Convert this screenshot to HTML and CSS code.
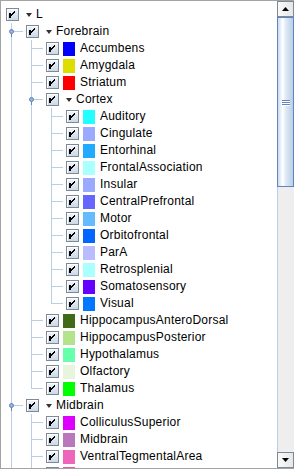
FILE: index.html
```html
<!DOCTYPE html>
<html>
<head>
<meta charset="utf-8">
<link rel="stylesheet" href="styles.css">
</head>
<body>
<div class="frame">
  <div class="tree">
    <div class="row"><span class="cb"></span><span class="tri"></span><span class="lbl">L</span></div>
    <div class="row"><span class="ind knob"></span><span class="cb"></span><span class="tri"></span><span class="lbl">Forebrain</span></div>
    <div class="row"><span class="ind v"></span><span class="ind tee"></span><span class="cb"></span><span class="sw" style="background:#0000ff"></span><span class="lbl">Accumbens</span></div>
    <div class="row"><span class="ind v"></span><span class="ind tee"></span><span class="cb"></span><span class="sw" style="background:#dddd00"></span><span class="lbl">Amygdala</span></div>
    <div class="row"><span class="ind v"></span><span class="ind tee"></span><span class="cb"></span><span class="sw" style="background:#ff0000"></span><span class="lbl">Striatum</span></div>
    <div class="row"><span class="ind v"></span><span class="ind knob"></span><span class="cb"></span><span class="tri"></span><span class="lbl">Cortex</span></div>
    <div class="row"><span class="ind v"></span><span class="ind v"></span><span class="ind tee"></span><span class="cb"></span><span class="sw" style="background:#22ffff"></span><span class="lbl">Auditory</span></div>
    <div class="row"><span class="ind v"></span><span class="ind v"></span><span class="ind tee"></span><span class="cb"></span><span class="sw" style="background:#99aaff"></span><span class="lbl">Cingulate</span></div>
    <div class="row"><span class="ind v"></span><span class="ind v"></span><span class="ind tee"></span><span class="cb"></span><span class="sw" style="background:#22aaff"></span><span class="lbl">Entorhinal</span></div>
    <div class="row"><span class="ind v"></span><span class="ind v"></span><span class="ind tee"></span><span class="cb"></span><span class="sw" style="background:#aaffff"></span><span class="lbl">FrontalAssociation</span></div>
    <div class="row"><span class="ind v"></span><span class="ind v"></span><span class="ind tee"></span><span class="cb"></span><span class="sw" style="background:#99aaff"></span><span class="lbl">Insular</span></div>
    <div class="row"><span class="ind v"></span><span class="ind v"></span><span class="ind tee"></span><span class="cb"></span><span class="sw" style="background:#6666ff"></span><span class="lbl">CentralPrefrontal</span></div>
    <div class="row"><span class="ind v"></span><span class="ind v"></span><span class="ind tee"></span><span class="cb"></span><span class="sw" style="background:#66bbff"></span><span class="lbl">Motor</span></div>
    <div class="row"><span class="ind v"></span><span class="ind v"></span><span class="ind tee"></span><span class="cb"></span><span class="sw" style="background:#0066ff"></span><span class="lbl">Orbitofrontal</span></div>
    <div class="row"><span class="ind v"></span><span class="ind v"></span><span class="ind tee"></span><span class="cb"></span><span class="sw" style="background:#bbbbff"></span><span class="lbl">ParA</span></div>
    <div class="row"><span class="ind v"></span><span class="ind v"></span><span class="ind tee"></span><span class="cb"></span><span class="sw" style="background:#aaffff"></span><span class="lbl">Retrosplenial</span></div>
    <div class="row"><span class="ind v"></span><span class="ind v"></span><span class="ind tee"></span><span class="cb"></span><span class="sw" style="background:#6600ff"></span><span class="lbl">Somatosensory</span></div>
    <div class="row"><span class="ind v"></span><span class="ind v"></span><span class="ind ell"></span><span class="cb"></span><span class="sw" style="background:#0077ff"></span><span class="lbl">Visual</span></div>
    <div class="row"><span class="ind v"></span><span class="ind tee"></span><span class="cb"></span><span class="sw" style="background:#3f6a18"></span><span class="lbl">HippocampusAnteroDorsal</span></div>
    <div class="row"><span class="ind v"></span><span class="ind tee"></span><span class="cb"></span><span class="sw" style="background:#b3e38a"></span><span class="lbl">HippocampusPosterior</span></div>
    <div class="row"><span class="ind v"></span><span class="ind tee"></span><span class="cb"></span><span class="sw" style="background:#66ffaa"></span><span class="lbl">Hypothalamus</span></div>
    <div class="row"><span class="ind v"></span><span class="ind tee"></span><span class="cb"></span><span class="sw" style="background:#e6f5dc"></span><span class="lbl">Olfactory</span></div>
    <div class="row"><span class="ind v"></span><span class="ind ell"></span><span class="cb"></span><span class="sw" style="background:#00ff00"></span><span class="lbl">Thalamus</span></div>
    <div class="row"><span class="ind knob"></span><span class="cb"></span><span class="tri"></span><span class="lbl">Midbrain</span></div>
    <div class="row"><span class="ind v"></span><span class="ind tee"></span><span class="cb"></span><span class="sw" style="background:#dd00ff"></span><span class="lbl">ColliculusSuperior</span></div>
    <div class="row"><span class="ind v"></span><span class="ind tee"></span><span class="cb"></span><span class="sw" style="background:#bb77bb"></span><span class="lbl">Midbrain</span></div>
    <div class="row"><span class="ind v"></span><span class="ind tee"></span><span class="cb"></span><span class="sw" style="background:#ee66bb"></span><span class="lbl">VentralTegmentalArea</span></div>
    <div class="row"><span class="ind v"></span><span class="ind tee"></span><span class="cb"></span><span class="sw" style="background:#ee55aa"></span><span class="lbl">ColliculusInferior</span></div>
  </div>
  <div class="sb">
    <div class="sbtn up"><svg width="7" height="4" viewBox="0 0 7 4"><path d="M0 4H7L3.5 0Z" fill="#000"/></svg></div>
    <div class="track">
      <div class="thumb"><span class="grip"></span><span class="grip"></span><span class="grip"></span></div>
    </div>
    <div class="sbtn down"><svg width="7" height="4" viewBox="0 0 7 4"><path d="M0 0H7L3.5 4Z" fill="#000"/></svg></div>
  </div>
</div>
</body>
</html>
```
FILE: styles.css
```css
html, body { margin: 0; padding: 0; background: #fff; }
.frame {
  width: 294px; height: 469px; box-sizing: border-box;
  display: flex; border: 1px solid #a3a3a3; border-right: 0; overflow: hidden;
  background: #fff;
}
.tree {
  flex: 1; overflow: hidden; padding-top: 5px;
  font-family: "Liberation Sans", Arial, sans-serif; font-size: 12px; letter-spacing: 0.22px;
  color: #000;
}
.row { height: 17px; display: flex; align-items: center; padding-left: 5px; white-space: nowrap; }
.ind { width: 20px; height: 17px; flex: none; }
.v { background: linear-gradient(#b8cfe5, #b8cfe5) 5px 0 / 1px 100% no-repeat; }
.tee {
  background:
    linear-gradient(#b8cfe5, #b8cfe5) 5px 0 / 1px 100% no-repeat,
    linear-gradient(#b8cfe5, #b8cfe5) 5px 8px / 12px 1px no-repeat;
}
.ell {
  background:
    linear-gradient(#b8cfe5, #b8cfe5) 5px 0 / 1px 9px no-repeat,
    linear-gradient(#b8cfe5, #b8cfe5) 5px 8px / 12px 1px no-repeat;
}
.knob {
  position: relative;
  background:
    linear-gradient(#b8cfe5, #b8cfe5) 5px 0 / 1px 100% no-repeat,
    linear-gradient(#b8cfe5, #b8cfe5) 5px 8px / 12px 1px no-repeat;
}
.knob::before {
  content: ""; position: absolute; left: 3px; top: 6px; width: 3px; height: 3px;
  border-radius: 50%; border: 1px solid #6382bf; background: #98b0db; box-sizing: content-box;
}
.knob::after {
  content: ""; position: absolute; left: 5px; top: 11px; width: 1px; height: 3px; background: #6382bf;
}
.cb {
  width: 13px; height: 13px; box-sizing: border-box; flex: none;
  border: 1px solid #7a8a99;
  background:
    url("data:image/svg+xml,%3Csvg xmlns='http://www.w3.org/2000/svg' width='11' height='11'%3E%3Cpath d='M8 2L4 6 M8 3L4 7' stroke='%23000' stroke-width='1' fill='none'/%3E%3Crect x='2' y='4' width='2' height='5' fill='%23000'/%3E%3C/svg%3E") 0 0 / 11px 11px no-repeat,
    linear-gradient(#f3f6fa, #cbd8e6);
  box-shadow: inset 1px 1px 0 #fff;
}
.tri {
  width: 0; height: 0; flex: none; margin-left: 7px; margin-right: 4px;
  border-left: 3.5px solid transparent; border-right: 3.5px solid transparent; border-top: 4px solid #333;
}
.sw { width: 12px; height: 14px; flex: none; margin-left: 4px; margin-right: 5px; }
.lbl { line-height: 17px; }
.sb {
  width: 17px; flex: none; display: flex; flex-direction: column;
  background: #eeeeee; box-sizing: border-box; border-left: 1px solid #b8cfe5;
}
.sbtn {
  height: 16px; flex: none; display: flex; align-items: center; justify-content: center;
  background: linear-gradient(90deg, #fafafa, #e6e6e6); border: 1px solid #7a8a99; box-sizing: border-box;
  margin-left: -1px;
}
.track { flex: 1; }
.thumb {
  height: 170px; margin-left: -1px; box-sizing: border-box; border: 1px solid #6382bf;
  background: linear-gradient(90deg, #c8dbef 0%, #ffffff 30%, #dce8f5 55%, #b8cfe5 100%);
  display: flex; flex-direction: column; align-items: center; justify-content: center; gap: 1px;
}
.grip { width: 8px; height: 1px; background: #6382bf; box-shadow: 0 1px 0 #fff; }
```
